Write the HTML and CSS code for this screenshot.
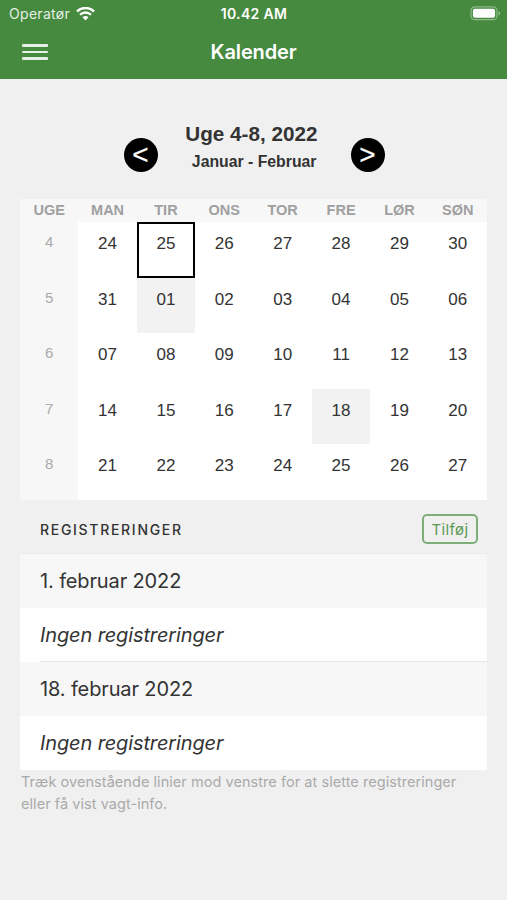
FILE: index.html
```
<!DOCTYPE html>
<html lang="da">
<head>
    <meta charset="UTF-8">
    <meta name="viewport" content="width=device-width, initial-scale=1.0">
    <title>Kalender</title>
    <link rel="stylesheet" href="styles.css">
</head>
<body>
    <header class="header">
        <div class="statusbar">
            <div class="carrier">
                <span>Operatør</span>
                <svg class="wifi" width="19" height="14" viewBox="0 0 19 14" fill="none" stroke="#fff">
                    <path d="M1 4.5a12.1 12.1 0 0 1 17 0" stroke-width="2.5"/>
                    <path d="M4 7.8a7.7 7.7 0 0 1 11 0" stroke-width="2.3"/>
                    <path d="M9.5 13.6l-3-3.4a4.2 4.2 0 0 1 6 0z" fill="#fff" stroke="none"/>
                </svg>
            </div>
            <span class="clock">10.42 AM</span>
            <svg class="battery" width="31" height="15" viewBox="0 0 31 15">
                <rect x="1" y=".9" width="26" height="12.8" rx="3.8" fill="none" stroke="#fff" stroke-opacity=".4" stroke-width="1.2"/>
                <rect x="2.9" y="2.8" width="22.2" height="9" rx="2" fill="#fff"/>
                <path d="M28.6 5c2 .8 2 3.6 0 4.4z" fill="#fff" fill-opacity=".5"/>
            </svg>
        </div>
        <nav class="navbar">
            <button class="menuButton" aria-label="Menu">
                <span></span>
                <span></span>
                <span></span>
            </button>
            <h1>Kalender</h1>
        </nav>
    </header>

    <main>
        <div class="period">
            <button class="arrow">&lt;</button>
            <div class="periodText">
                <h2>Uge 4-8, 2022</h2>
                <h3>Januar - Februar</h3>
            </div>
            <button class="arrow">&gt;</button>
        </div>

        <table class="calendar">
            <thead>
                <tr><th>UGE</th><th>MAN</th><th>TIR</th><th>ONS</th><th>TOR</th><th>FRE</th><th>LØR</th><th>SØN</th></tr>
            </thead>
            <tbody>
                <tr><td class="week">4</td><td>24</td><td class="today"><div>25</div></td><td>26</td><td>27</td><td>28</td><td>29</td><td>30</td></tr>
                <tr><td class="week">5</td><td>31</td><td class="marked">01</td><td>02</td><td>03</td><td>04</td><td>05</td><td>06</td></tr>
                <tr><td class="week">6</td><td>07</td><td>08</td><td>09</td><td>10</td><td>11</td><td>12</td><td>13</td></tr>
                <tr><td class="week">7</td><td>14</td><td>15</td><td>16</td><td>17</td><td class="marked">18</td><td>19</td><td>20</td></tr>
                <tr><td class="week">8</td><td>21</td><td>22</td><td>23</td><td>24</td><td>25</td><td>26</td><td>27</td></tr>
            </tbody>
        </table>

        <section class="registrations">
            <div class="listHeader">
                <h4>REGISTRERINGER</h4>
                <button class="addButton">Tilføj</button>
            </div>
            <div class="date">1. februar 2022</div>
            <div class="entry">
                <div class="entryText divided">Ingen registreringer</div>
            </div>
            <div class="date">18. februar 2022</div>
            <div class="entry">
                <div class="entryText">Ingen registreringer</div>
            </div>
        </section>

        <p class="hint">Træk ovenstående linier mod venstre for at slette registreringer eller få vist vagt-info.</p>
    </main>
</body>
</html>
```
FILE: styles.css
```
* {
    box-sizing: border-box;
}

body {
    margin: 0;
    min-height: 100vh;
    background-color: #f0f0f0;
    font-family: Inter, "Liberation Sans", sans-serif;
    color: #333;
}

h1, h2, h3, h4, p {
    margin: 0;
}

button {
    padding: 0;
    border: none;
    background: none;
    font-family: inherit;
}

.header {
    height: 79px;
    background-color: #458a3f;
    color: #fff;
}

.statusbar {
    display: grid;
    grid-template-columns: 1fr auto 1fr;
    align-items: center;
    height: 27px;
    padding: 0 6px 0 9px;
    font-size: 14px;
}

.carrier {
    display: flex;
    align-items: center;
    gap: 6px;
    color: #e6f0e5;
    letter-spacing: 0.3px;
}

.clock {
    margin-right: 2px;
    font-weight: 600;
    letter-spacing: 0.35px;
}

.battery {
    justify-self: end;
}

.navbar {
    display: grid;
    grid-template-columns: 1fr auto 1fr;
    align-items: center;
    height: 50px;
    padding: 0 22px;
}

.navbar h1 {
    font-size: 20px;
    font-weight: 600;
    letter-spacing: -0.15px;
}

.menuButton {
    display: flex;
    flex-direction: column;
    gap: 4px;
    width: 26px;
}

.menuButton span {
    height: 2.5px;
    border-radius: 1px;
    background-color: #e6f0e5;
}

main {
    padding: 0 20px;
}

.period {
    display: flex;
    justify-content: center;
    align-items: flex-end;
    height: 93px;
    padding-left: 1px;
    font-family: "Liberation Sans", sans-serif;
}

.periodText {
    width: 193px;
    padding-right: 33px;
    text-align: right;
}

.periodText h2 {
    font-size: 20.7px;
    line-height: 25px;
}

.periodText h3 {
    margin-bottom: -5px;
    padding-right: 1px;
    font-size: 15.8px;
    line-height: 31px;
}

.arrow {
    width: 34px;
    height: 34px;
    border-radius: 50%;
    background-color: #000;
    color: #fff;
    font-size: 28px;
    line-height: 34px;
    -webkit-text-stroke: 0.2px #fff;
}

.calendar {
    width: 467px;
    margin-top: 27px;
    border-collapse: collapse;
    table-layout: fixed;
    background-color: #fff;
    font-family: "Liberation Sans", sans-serif;
}

.calendar th {
    height: 23px;
    padding: 0 0 2px;
    background-color: #f7f7f7;
    color: #a0a0a0;
    font-size: 14.5px;
}

.calendar td {
    height: 55.6px;
    padding: 12px 0 0;
    font-size: 17px;
    line-height: 19px;
    text-align: center;
    vertical-align: top;
}

.calendar .week {
    padding-top: 10px;
    background-color: #f7f7f7;
    color: #aaa;
    font-size: 15px;
}

.calendar .marked {
    background-color: #f2f2f2;
}

.calendar .today {
    padding: 0;
}

.today div {
    height: 55.6px;
    padding-top: 10px;
    border: 2px solid #000;
}

.registrations {
    width: 467px;
    font-size: 20px;
    letter-spacing: -0.13px;
}

.listHeader {
    display: flex;
    justify-content: space-between;
    align-items: center;
    height: 54px;
    padding: 5px 9px 0 20px;
    border-bottom: 1px solid #ebebeb;
}

.listHeader h4 {
    padding-top: 1px;
    font-size: 14px;
    font-weight: 500;
    letter-spacing: 1.7px;
}

.addButton {
    width: 56px;
    height: 30px;
    margin-top: 1px;
    border: 2px solid #7fae7b;
    border-radius: 5px;
    color: #5b9955;
    font-size: 15px;
    letter-spacing: 0.4px;
}

.date {
    height: 54px;
    padding-left: 20px;
    background-color: #f7f7f7;
    line-height: 55px;
}

.entry {
    height: 54px;
    padding-left: 20px;
    background-color: #fff;
    font-style: italic;
    line-height: 55px;
}

.entryText {
    height: 54px;
}

.divided {
    border-bottom: 1px solid #e6e6e6;
}

.hint {
    padding: 1px 20px 0 1px;
    color: #aaa;
    font-size: 14.5px;
    letter-spacing: 0.05px;
    line-height: 22px;
}
```
